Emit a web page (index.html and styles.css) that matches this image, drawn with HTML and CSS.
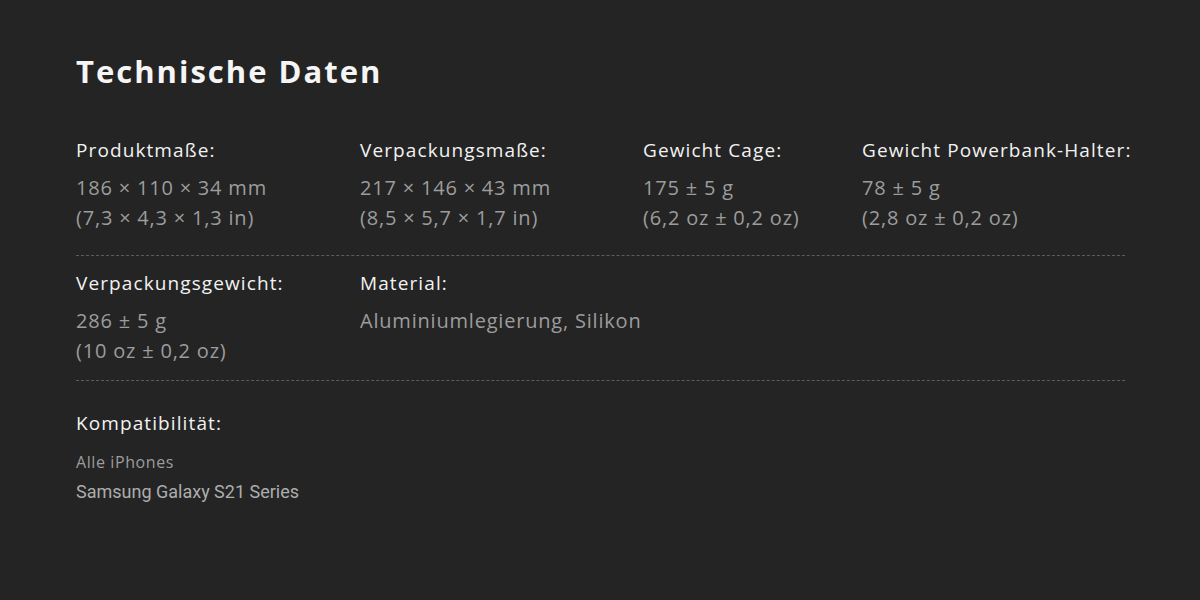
FILE: index.html
```html
<!DOCTYPE html>
<html lang="de">
<head>
<meta charset="utf-8">
<title>Technische Daten</title>
<link rel="stylesheet" href="styles.css">
</head>
<body>
<section class="specs">
  <h2 class="specs-title">Technische Daten</h2>
  <div class="spec-row row-4">
    <div class="spec">
      <div class="spec-label">Produktmaße:</div>
      <div class="spec-value">186 × 110 × 34 mm<br>(7,3 × 4,3 × 1,3 in)</div>
    </div>
    <div class="spec">
      <div class="spec-label">Verpackungsmaße:</div>
      <div class="spec-value">217 × 146 × 43 mm<br>(8,5 × 5,7 × 1,7 in)</div>
    </div>
    <div class="spec">
      <div class="spec-label">Gewicht Cage:</div>
      <div class="spec-value">175 ± 5 g<br>(6,2 oz ± 0,2 oz)</div>
    </div>
    <div class="spec">
      <div class="spec-label">Gewicht Powerbank-Halter:</div>
      <div class="spec-value">78 ± 5 g<br>(2,8 oz ± 0,2 oz)</div>
    </div>
  </div>
  <div class="spec-row row-2">
    <div class="spec">
      <div class="spec-label">Verpackungsgewicht:</div>
      <div class="spec-value">286 ± 5 g<br>(10 oz ± 0,2 oz)</div>
    </div>
    <div class="spec">
      <div class="spec-label">Material:</div>
      <div class="spec-value">Aluminiumlegierung, Silikon</div>
    </div>
  </div>
  <div class="compat">
    <div class="spec-label">Kompatibilität:</div>
    <div class="compat-item">Alle iPhones</div>
    <div class="compat-item strong">Samsung Galaxy S21 Series</div>
  </div>
</section>
</body>
</html>
```

FILE: styles.css
```css
html, body {
  margin: 0;
  padding: 0;
  background: #242424;
}
body {
  font-family: "Open Sans", "Liberation Sans", sans-serif;
  color: #f2f2f2;
}
.specs {
  width: 1049px;
  padding: 48px 0 0 76px;
}
.specs-title {
  margin: 0;
  font-size: 31px;
  font-weight: 700;
  line-height: 46px;
  letter-spacing: 2px;
  color: #f5f5f5;
}
.spec-row {
  display: grid;
  grid-template-columns: 284px 283px 219px 1fr;
  border-bottom: 1px dashed #5c5c5c;
}
.row-4 {
  margin-top: 42px;
  padding-bottom: 22px;
}
.row-2 {
  padding-top: 13px;
  padding-bottom: 14px;
}
.spec-label {
  font-size: 19px;
  line-height: 28px;
  letter-spacing: 1.1px;
  white-space: nowrap;
  color: #f2f2f2;
}
.spec-value {
  margin-top: 9px;
  font-size: 20px;
  line-height: 30px;
  letter-spacing: 0.8px;
  white-space: nowrap;
  color: #9c9c9c;
}
.compat {
  padding-top: 28px;
}
.compat .spec-label {
  margin-bottom: 10px;
}
.compat-item {
  font-size: 16px;
  line-height: 30px;
  letter-spacing: 0.6px;
  color: #9c9c9c;
}
.compat-item.strong {
  font-family: Roboto, "Liberation Sans", sans-serif;
  font-size: 18px;
  font-weight: 400;
  letter-spacing: 0;
  color: #adadad;
}
```
